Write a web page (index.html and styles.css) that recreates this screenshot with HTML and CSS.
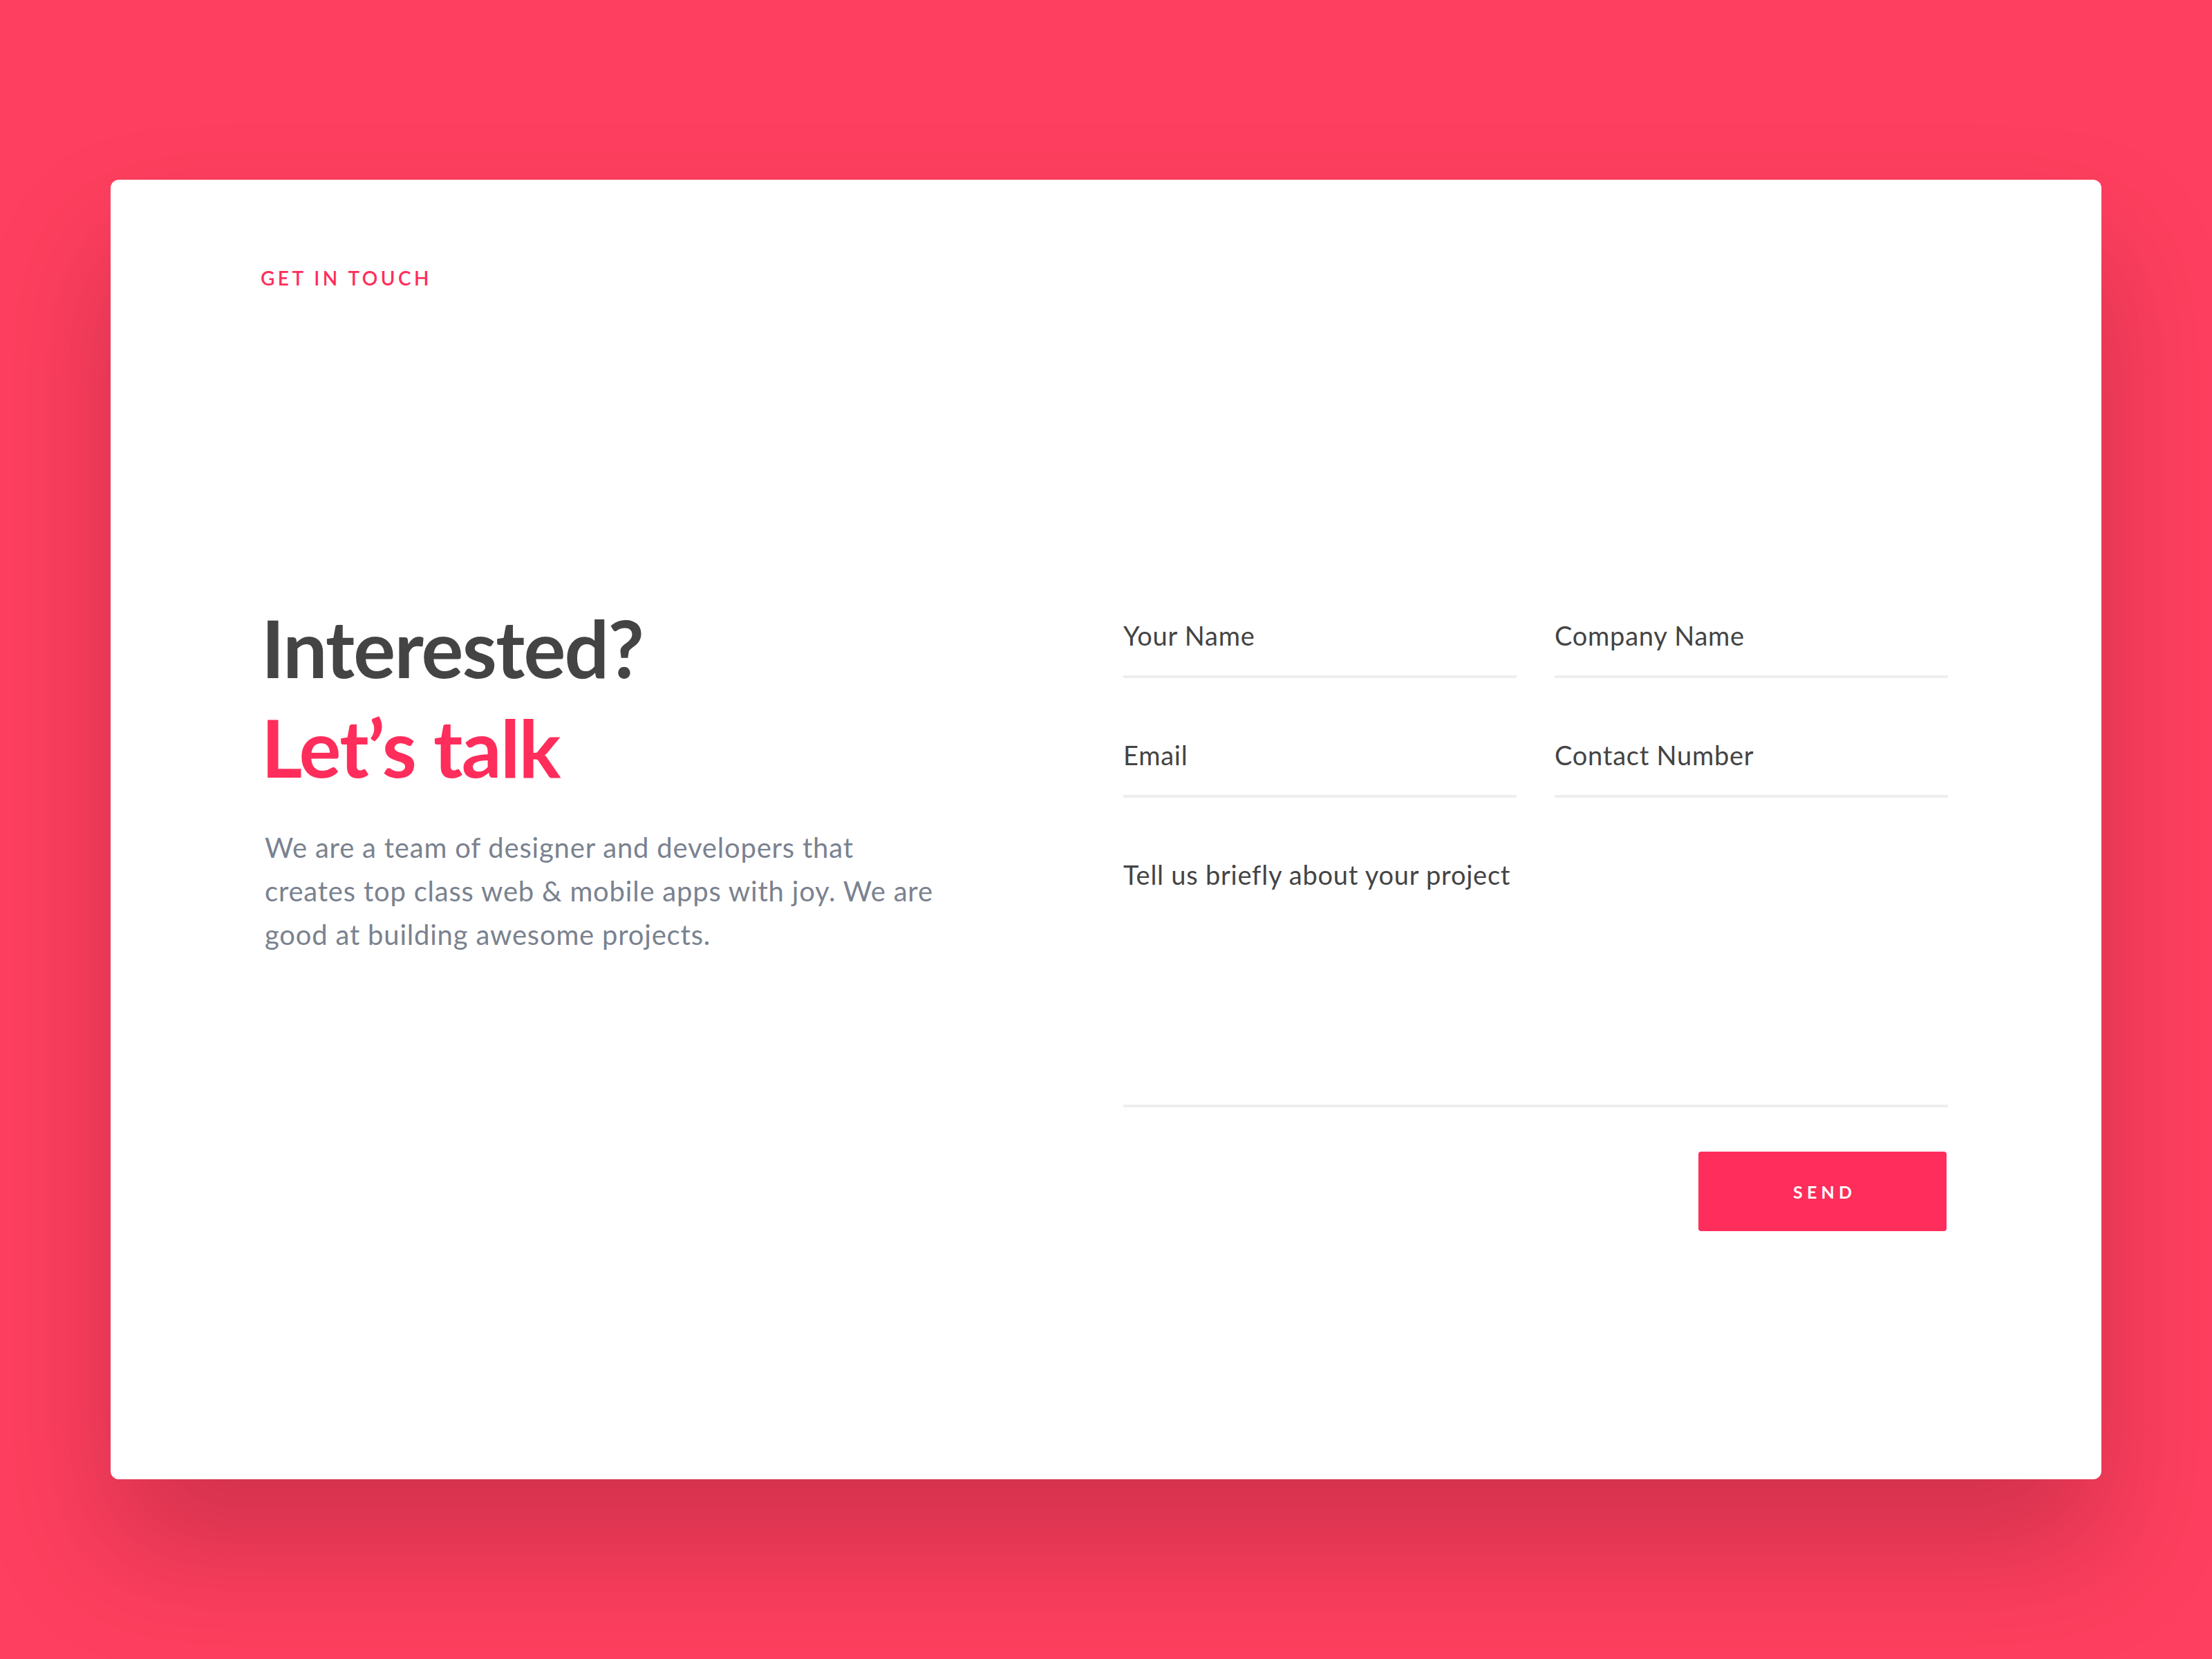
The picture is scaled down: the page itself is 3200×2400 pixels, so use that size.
FILE: index.html
```html
<!DOCTYPE html>
<html lang="en">
<head>
<meta charset="utf-8">
<title>Get in touch</title>
<link rel="stylesheet" href="styles.css">
</head>
<body>
<div class="page">
  <section class="card">
    <div class="eyebrow">GET IN TOUCH</div>
    <div class="main">
      <div class="intro">
        <h1 class="title"><span class="title-dark">Interested?</span><span class="title-red">Let’s talk</span></h1>
        <p class="lead">We are a team of designer and developers that creates top class web &amp; mobile apps with joy. We are good at building awesome projects.</p>
      </div>
      <form class="form">
        <div class="grid">
          <label class="field"><span class="label">Your Name</span></label>
          <label class="field"><span class="label">Company Name</span></label>
          <label class="field"><span class="label">Email</span></label>
          <label class="field"><span class="label">Contact Number</span></label>
          <label class="field field-wide field-area"><span class="label">Tell us briefly about your project</span></label>
        </div>
        <div class="actions">
          <button type="button" class="send">SEND</button>
        </div>
      </form>
    </div>
  </section>
</div>
</body>
</html>
```

FILE: styles.css
```css
* { box-sizing: border-box; }

html, body {
  margin: 0;
  padding: 0;
}

body {
  background: #ff3f5f;
  font-family: "Lato", "Inter", "Liberation Sans", sans-serif;
  width: 3200px;
  height: 2400px;
  overflow: hidden;
}

.page {
  padding: 260px 160px;
}

.card {
  height: 1880px;
  background: #ffffff;
  border-radius: 12px;
  box-shadow: 0 100px 180px rgba(40, 0, 15, 0.22);
  padding: 125px 222px 0 217px;
}

.eyebrow {
  color: #ff2d5b;
  font-size: 28px;
  line-height: 34px;
  font-weight: 600;
  letter-spacing: 0.16em;
}

.main {
  display: flex;
  justify-content: space-between;
  align-items: flex-start;
  margin-top: 446px;
}

.intro {
  width: 1000px;
  padding-left: 6px;
}

.title {
  margin: 0 0 0 -5px;
  font-size: 114px;
  line-height: 144px;
  font-weight: 700;
  letter-spacing: -0.015em;
}

.title-dark, .title-red {
  display: block;
}

.title-dark { color: #444444; }
.title-red { color: #ff2d5b; }

.lead {
  margin: 42px 0 0 0;
  width: 985px;
  color: #7a828f;
  font-size: 40px;
  line-height: 63px;
  font-weight: 400;
  letter-spacing: 0.02em;
}

.form {
  width: 1193px;
  margin-top: 31px;
}

.grid {
  display: grid;
  grid-template-columns: 1fr 1fr;
  column-gap: 55px;
  row-gap: 88px;
}

.field {
  display: block;
  padding-bottom: 35px;
  border-bottom: 4px solid #eeeeee;
}

.field-wide {
  grid-column: 1 / span 2;
}

.field-area {
  padding-bottom: 310px;
}

.label {
  display: block;
  color: #444444;
  font-size: 38px;
  line-height: 46px;
  font-weight: 400;
  letter-spacing: 0.02em;
}

.actions {
  display: flex;
  justify-content: flex-end;
  margin-top: 64px;
  padding-right: 2px;
}

.send {
  width: 359px;
  height: 115px;
  border: none;
  border-radius: 4px;
  background: #ff2d5b;
  color: #ffffff;
  font-family: "Lato", "Inter", "Liberation Sans", sans-serif;
  font-size: 25px;
  font-weight: 700;
  letter-spacing: 0.25em;
  padding: 0 0 0 0.25em;
}
```
